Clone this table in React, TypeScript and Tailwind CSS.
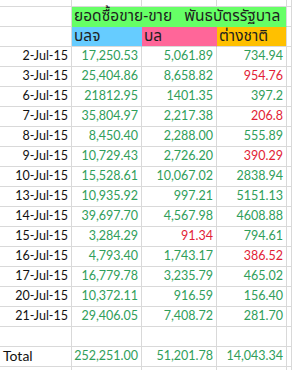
import React from "react";

type Row = {
    date: string;
    a: string;
    b: string;
    c: string;
    bRed?: boolean;
    cRed?: boolean;
};

const rows: Row[] = [
    { date: "2-Jul-15", a: "17,250.53", b: "5,061.89", c: "734.94" },
    { date: "3-Jul-15", a: "25,404.86", b: "8,658.82", c: "954.76", cRed: true },
    { date: "6-Jul-15", a: "21812.95", b: "1401.35", c: "397.2" },
    { date: "7-Jul-15", a: "35,804.97", b: "2,217.38", c: "206.8", cRed: true },
    { date: "8-Jul-15", a: "8,450.40", b: "2,288.00", c: "555.89" },
    { date: "9-Jul-15", a: "10,729.43", b: "2,726.20", c: "390.29", cRed: true },
    { date: "10-Jul-15", a: "15,528.61", b: "10,067.02", c: "2838.94" },
    { date: "13-Jul-15", a: "10,935.92", b: "997.21", c: "5151.13" },
    { date: "14-Jul-15", a: "39,697.70", b: "4,567.98", c: "4608.88" },
    { date: "15-Jul-15", a: "3,284.29", b: "91.34", c: "794.61", bRed: true },
    { date: "16-Jul-15", a: "4,793.40", b: "1,743.17", c: "386.52", cRed: true },
    { date: "17-Jul-15", a: "16,779.78", b: "3,235.79", c: "465.02" },
    { date: "20-Jul-15", a: "10,372.11", b: "916.59", c: "156.40" },
    { date: "21-Jul-15", a: "29,406.05", b: "7,408.72", c: "281.70" },
];

const line = "border-r border-b border-[#d9d9d9]";
const num = "flex items-end justify-end pr-[3px] pb-[2px]";

// one plain grid row: four cells plus the cut-off column on the right
const GridRow: React.FC<{
    h?: string;
    cells?: React.ReactNode[];
    first?: React.ReactNode;
}> = ({ h = "h-[20px]", cells = [], first }) => (
    <div className={`flex ${h} leading-[16px]`}>
        <div className={`w-[72px] ${line} flex items-end pb-[2px]`}>{first}</div>
        <div className={`w-[70px] ${line} ${num}`}>{cells[0]}</div>
        <div className={`w-[75px] ${line} ${num}`}>{cells[1]}</div>
        <div className={`w-[70px] ${line} ${num}`}>{cells[2]}</div>
        <div className={`flex-1 ${line}`}></div>
    </div>
);

const green = "text-[#2f9e5a]";
const red = "text-[#e21d36]";
const thai = { fontFamily: '"Noto Sans Thai", "Tahoma", "Leelawadee UI", sans-serif' };

export default function App() {
    return (
        <div
            className="w-[292px] h-[370px] overflow-hidden bg-white text-[12.5px] text-[#111]"
            style={{ fontFamily: '"Lato", "Liberation Sans", sans-serif' }}
        >
            {/* top sliver of the row above */}
            <GridRow h="h-[7px]" />

            {/* merged green title */}
            <div className="flex h-[20px]">
                <div className={`w-[72px] ${line}`}></div>
                <div
                    className="w-[215px] bg-[#66ff66] border-r border-[#d9d9d9] border-b border-b-[#66ff66] flex items-center pl-[2px] text-[15.5px] leading-[18px] text-[#1e1e1e] whitespace-pre"
                    style={thai}
                >
                    ยอดซื้อขาย-ขาย   พันธบัตรรัฐบาล
                </div>
                <div className={`flex-1 ${line}`}></div>
            </div>

            {/* coloured sub headers */}
            <div className="flex h-[20px] text-[15.5px] leading-[18px] text-[#1e1e1e]" style={thai}>
                <div className={`w-[72px] ${line}`}></div>
                <div className="w-[70px] bg-[#66ccff] border-r border-r-[#66ccff] border-b border-b-[#d9d9d9] flex items-center pl-[2px]">
                    บลจ
                </div>
                <div className="w-[75px] bg-[#ff6699] border-r border-r-[#ff6699] border-b border-b-[#d9d9d9] flex items-center pl-[2px]">
                    บล
                </div>
                <div className="w-[70px] bg-[#ffc000] border-r border-r-[#d9d9d9] border-b border-b-[#d9d9d9] flex items-center pl-[2px]">
                    ต่างชาติ
                </div>
                <div className={`flex-1 ${line}`}></div>
            </div>

            {rows.map((r) => (
                <GridRow
                    key={r.date}
                    first={<span className="w-full text-right pr-[3px]">{r.date}</span>}
                    cells={[
                        <span className={green}>{r.a}</span>,
                        <span className={r.bRed ? red : green}>{r.b}</span>,
                        <span className={r.cRed ? red : green}>{r.c}</span>,
                    ]}
                />
            ))}

            <GridRow />

            <GridRow
                first={<span className="pl-[3px] text-[14px]">Total</span>}
                cells={[
                    <span className={green}>252,251.00</span>,
                    <span className={green}>51,201.78</span>,
                    <span className={green}>14,043.34</span>,
                ]}
            />

            <GridRow h="h-[5px]" />
        </div>
    );
}
